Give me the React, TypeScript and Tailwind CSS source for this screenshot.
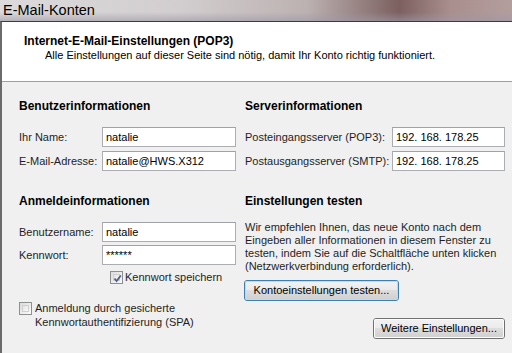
import React from "react";

const font = { fontFamily: '"Segoe UI", "Liberation Sans", Arial, sans-serif' };

function Field({ label, value, labelW, inputW }: { label: string; value: string; labelW: string; inputW: string }) {
  return (
    <div className="flex items-center h-[20px]">
      <span className={`${labelW} shrink-0 whitespace-nowrap text-[11px] text-[#1e1e1e]`}>{label}</span>
      <div
        className={`${inputW} h-[20px] bg-white border border-[#abadb3] border-t-[#a0a2a8] px-[3px] pt-[1px] flex items-center whitespace-nowrap text-[11px] text-black leading-none`}
      >
        {value}
      </div>
    </div>
  );
}

function Check({ checked }: { checked?: boolean }) {
  return (
    <div className="w-[13px] h-[13px] shrink-0 border border-[#8e8f8f] bg-gradient-to-br from-[#dcdcdc] to-[#fbfbfb] p-[2px]">
      <div className="w-full h-full border border-[#cfd0d0] bg-gradient-to-br from-[#e4e4e4] to-[#f8f8f8] relative">
        {checked && (
          <svg viewBox="0 0 9 9" className="absolute -left-[1px] -top-[1px] w-[9px] h-[9px]">
            <path d="M1.5 4.5 L3.6 7 L7.8 1.5" fill="none" stroke="#4a5f97" strokeWidth="1.8" />
          </svg>
        )}
      </div>
    </div>
  );
}

function Button({ children, focus, width }: { children: React.ReactNode; focus?: boolean; width: string }) {
  return (
    <div
      className={`${width} h-[21px] rounded-[3px] border ${
        focus ? "border-[#3c7fb1]" : "border-[#707070]"
      } bg-[linear-gradient(#f2f2f2_0%,#ebebeb_45%,#dddddd_50%,#cfcfcf_100%)] p-0`}
    >
      <div
        className={`${
          focus ? "shadow-[inset_0_0_0_1px_#b8dcf0]" : "shadow-[inset_0_0_0_1px_#fcfcfc]"
        } w-full h-full rounded-[2px] flex items-center justify-center whitespace-nowrap text-[11px] text-black`}
      >
        {children}
      </div>
    </div>
  );
}

export default function App() {
  return (
    <div className="w-[512px] h-[353px] overflow-hidden flex flex-col bg-[#f0f0f0] select-none" style={font}>
      <div className="h-[21px] shrink-0 bg-[linear-gradient(90deg,#dcdadb_0%,#d2cecf_35%,#bcb1b1_60%,#7b605f_78%,#a98f8d_88%,#b39e9e_100%)] relative">
        <div className="absolute inset-x-0 bottom-0 h-[9px] bg-[linear-gradient(transparent,#9c98a6)] opacity-60" />
        <span className="absolute left-[3px] top-[1px] text-[14.5px] leading-[18px] text-black">E-Mail-Konten</span>
      </div>
      <div className="flex-1 flex border-l-2 border-l-[#6b6b6b] border-t border-t-[#3a3a40]">
        <div className="flex-1 flex flex-col">
          <div className="h-[60px] shrink-0 bg-white border-b border-[#a0a0a0] pl-[22px] pt-[11px]">
            <div className="text-[12px] font-bold text-black leading-[16px]">Internet-E-Mail-Einstellungen (POP3)</div>
            <div className="text-[11px] text-black leading-[16px] pl-[21px] -mt-[2px]">
              Alle Einstellungen auf dieser Seite sind nötig, damit Ihr Konto richtig funktioniert.
            </div>
          </div>
          <div className="flex-1 flex pl-[17px] pt-[16px]">
            <div className="w-[226px] shrink-0 flex flex-col">
              <div className="text-[12px] font-bold leading-[16px] text-black">Benutzerinformationen</div>
              <div className="mt-[13px] flex flex-col gap-[4px]">
                <Field label="Ihr Name:" value="natalie" labelW="w-[83px]" inputW="w-[134px]" />
                <Field label="E-Mail-Adresse:" value="natalie@HWS.X312" labelW="w-[83px]" inputW="w-[134px]" />
              </div>
              <div className="mt-[22px] text-[12px] font-bold leading-[16px] text-black">Anmeldeinformationen</div>
              <div className="mt-[13px] flex flex-col gap-[3px]">
                <Field label="Benutzername:" value="natalie" labelW="w-[83px]" inputW="w-[134px]" />
                <Field label="Kennwort:" value="******" labelW="w-[83px]" inputW="w-[134px]" />
              </div>
              <div className="mt-[6px] ml-[91px] flex items-center gap-[2px] text-[11px] leading-[13px] text-[#1e1e1e]">
                <Check checked />
                <span>Kennwort speichern</span>
              </div>
              <div className="mt-[17px] flex items-start gap-[3px] text-[11px] leading-[14px] text-[#1e1e1e]">
                <div className="mt-[1px]">
                  <Check />
                </div>
                <span>
                  Anmeldung durch gesicherte
                  <br />
                  Kennwortauthentifizierung (SPA)
                </span>
              </div>
            </div>
            <div className="flex-1 flex flex-col pr-[7px]">
              <div className="text-[12px] font-bold leading-[16px] text-black">Serverinformationen</div>
              <div className="mt-[13px] flex flex-col gap-[4px]">
                <Field label="Posteingangsserver (POP3):" value="192. 168. 178.25" labelW="w-[147px]" inputW="w-[113px]" />
                <Field label="Postausgangsserver (SMTP):" value="192. 168. 178.25" labelW="w-[147px]" inputW="w-[113px]" />
              </div>
              <div className="mt-[22px] text-[12px] font-bold leading-[16px] text-black">Einstellungen testen</div>
              <p className="mt-[12px] text-[11px] leading-[13px] text-[#1e1e1e] whitespace-nowrap">
                Wir empfehlen Ihnen, das neue Konto nach dem
                <br />
                Eingeben aller Informationen in diesem Fenster zu
                <br />
                testen, indem Sie auf die Schaltfläche unten klicken
                <br />
                (Netzwerkverbindung erforderlich).
              </p>
              <div className="mt-[7px] -ml-[1px] self-start">
                <Button focus width="w-[155px]">
                  Kontoeinstellungen testen...
                </Button>
              </div>
              <div className="mt-[17px] self-end">
                <Button width="w-[132px]">Weitere Einstellungen...</Button>
              </div>
            </div>
          </div>
        </div>
      </div>
    </div>
  );
}
